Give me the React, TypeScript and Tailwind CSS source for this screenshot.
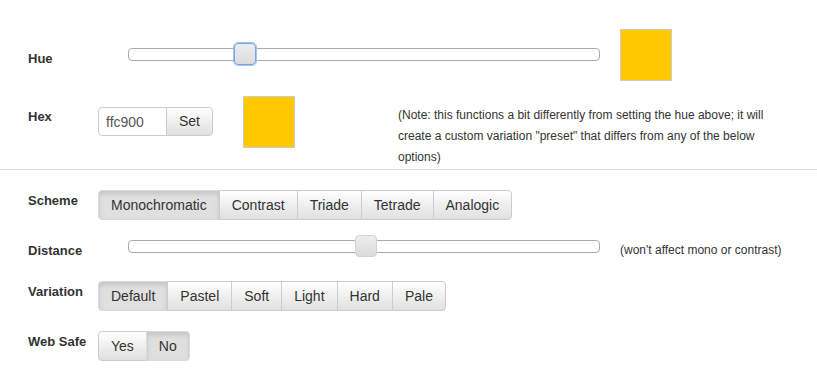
import { useState } from 'react'

const schemes = ['Monochromatic', 'Contrast', 'Triade', 'Tetrade', 'Analogic']
const variations = ['Default', 'Pastel', 'Soft', 'Light', 'Hard', 'Pale']
const webSafe = ['Yes', 'No']

function BtnGroup({ items, active, onPick }: { items: string[]; active: string; onPick: (v: string) => void }) {
  return (
    <div className="flex">
      {items.map((it, i) => (
        <button
          key={it}
          onClick={() => onPick(it)}
          className={
            'h-[30px] px-3 text-[14px] text-[#333] border border-[#ccc] ' +
            (i > 0 ? '-ml-px ' : '') +
            (i === 0 ? 'rounded-l ' : '') +
            (i === items.length - 1 ? 'rounded-r ' : '') +
            (it === active
              ? 'bg-[#e0e0e0] shadow-[inset_0_3px_5px_rgba(0,0,0,0.125)] border-[#dbdbdb]'
              : 'bg-gradient-to-b from-white to-[#e0e0e0]')
          }
        >
          {it}
        </button>
      ))}
    </div>
  )
}

function Slider({ pos, focused }: { pos: number; focused?: boolean }) {
  return (
    <div className="relative w-[472px] h-[13px] border border-[#aaa] rounded bg-white">
      <div
        className={
          'absolute top-[-6px] w-[22px] h-[22px] rounded bg-gradient-to-b from-[#ededed] to-[#dcdcdc] border ' +
          (focused ? 'border-[#7ba3e6] shadow-[0_0_0_1px_#a8c3ef]' : 'border-[#d3d3d3]')
        }
        style={{ left: pos }}
      />
    </div>
  )
}

export default function App() {
  const [scheme, setScheme] = useState('Monochromatic')
  const [variation, setVariation] = useState('Default')
  const [safe, setSafe] = useState('No')

  return (
    <div className="w-[817px] h-[380px] bg-white text-[#333] overflow-hidden" style={{ fontFamily: '"Liberation Sans", Arial, sans-serif' }}>
      {/* Hue */}
      <div className="flex items-start pl-[28px] pt-[29px] h-[81px]">
        <div className="w-[70px] mt-[22px] text-[13px] leading-4 font-bold">Hue</div>
        <div className="ml-[30px] mt-[19px]">
          <Slider pos={105} focused />
        </div>
        <div className="ml-[20px] w-[52px] h-[52px] bg-[#ffc900] border border-[#ccc]" />
      </div>

      {/* Hex */}
      <div className="flex items-start pl-[28px] mt-[15px] h-[73px]">
        <div className="w-[70px] mt-[13px] text-[13px] leading-4 font-bold">Hex</div>
        <div className="flex mt-[11px]">
          <input
            defaultValue="ffc900"
            className="w-[69px] h-[29px] px-[7px] text-[14px] text-[#555] border border-[#ccc] rounded-l bg-white outline-none"
          />
          <button className="-ml-px w-[47px] h-[29px] text-[14px] text-[#333] border border-[#ccc] rounded-r bg-gradient-to-b from-white to-[#e0e0e0]">
            Set
          </button>
        </div>
        <div className="ml-[30px] w-[52px] h-[52px] bg-[#ffc900] border border-[#ccc]" />
        <p className="ml-[103px] mt-[9px] w-[380px] text-[12px] leading-[21px] text-[#333]">
          (Note: this functions a bit differently from setting the hue above; it will create a custom variation "preset" that differs from any of the below options)
        </p>
      </div>

      <div className="border-t border-[#ddd]" />

      {/* Scheme */}
      <div className="flex items-start pl-[28px] mt-[20px]">
        <div className="w-[70px] mt-[3px] text-[13px] leading-4 font-bold">Scheme</div>
        <BtnGroup items={schemes} active={scheme} onPick={setScheme} />
      </div>

      {/* Distance */}
      <div className="flex items-start pl-[28px] mt-[20px]">
        <div className="w-[70px] mt-[3px] text-[13px] leading-4 font-bold">Distance</div>
        <div className="ml-[30px]">
          <Slider pos={226} />
        </div>
        <div className="ml-[20px] mt-[3px] text-[12px] leading-[14px]">(won't affect mono or contrast)</div>
      </div>

      {/* Variation */}
      <div className="flex items-start pl-[28px] mt-[22px]">
        <div className="w-[70px] mt-[3px] text-[13px] leading-4 font-bold">Variation</div>
        <BtnGroup items={variations} active={variation} onPick={setVariation} />
      </div>

      {/* Web Safe */}
      <div className="flex items-start pl-[28px] mt-[20px]">
        <div className="w-[70px] mt-[3px] text-[13px] leading-4 font-bold">Web Safe</div>
        <BtnGroup items={webSafe} active={safe} onPick={setSafe} />
      </div>
    </div>
  )
}
